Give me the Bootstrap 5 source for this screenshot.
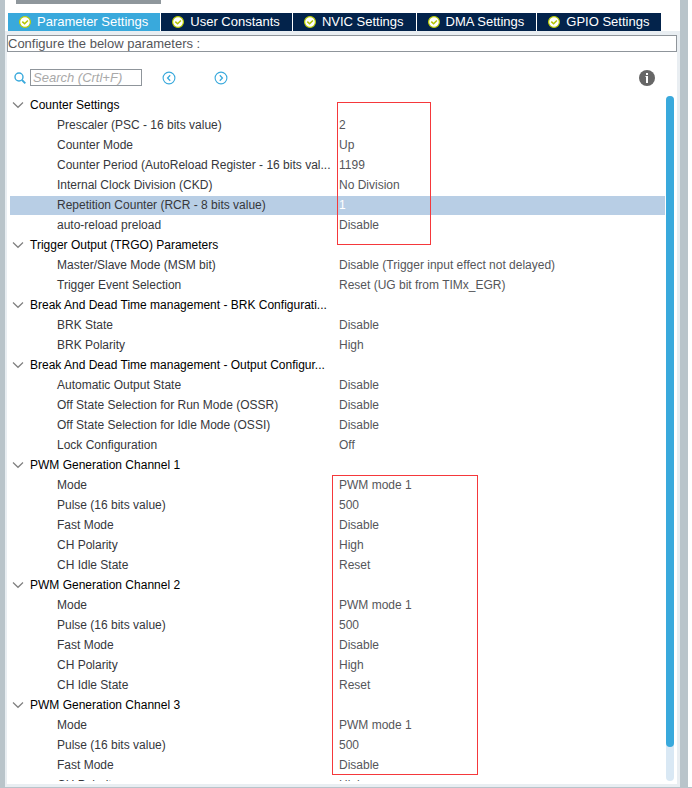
<!DOCTYPE html>
<html lang="en">
<head>
<meta charset="utf-8">
<meta name="viewport" content="width=device-width, initial-scale=1">
<title>Parameter Settings</title>
<link href="https://cdn.jsdelivr.net/npm/bootstrap@5.3.0/dist/css/bootstrap.min.css" rel="stylesheet">
<style>
  body { font: 12px/20px "Liberation Sans", Arial, sans-serif; color: #55565a; background: #fff; }
  .app-window { border-bottom: 1px solid #b9c4ca; padding-right: 4px; }
  .window-frame { border: solid #b9c4ca; border-width: 0 8px 0 5px; }
  .scroll-hint { width: 145px; height: 4px; margin-left: 11px; background: #8f979c; }
  .tab-strip { margin: 9px 0 0 3px; gap: 1px; }
  .config-tab { height: 18px; padding: 0 12px 0 11px; gap: 6px; border: 0; background: #03234b; color: #fff; font-size: 13px; line-height: 18px; white-space: nowrap; }
  .config-tab.active { background: #39a9dc; }
  .panel-edge { background: #e9eef2; padding: 4px 3px 3px 2px; min-height: 0; }
  .hint-line { border: 1px solid #8f959b; height: 17px; line-height: 15px; font-size: 13px; background: #fff; }
  .tool-row { padding: 17px 22px 0 7px; height: 43px; }
  .tool-row > * { height: 17px; align-items: center; }
  .find-box { width: 112px; margin: 0 20px 0 4px; padding: 0 2px; border: 1px solid #8f959b; border-radius: 0; font-size: 13px; font-style: italic; line-height: 15px; color: #55565a; }
  .find-box::placeholder { color: #a9a9a9; opacity: 1; }
  .bare-btn { border: 0; padding: 0; background: none; line-height: 1; display: flex; }
  .next-btn { margin-left: 38px; }
  .tree-area { min-height: 0; padding: 0 3px 3px; }
  .tree-clip { min-width: 0; margin-right: 1px; }
  .tree { table-layout: fixed; width: 100%; border-collapse: collapse; }
  .tree .name-col { width: 329px; }
  .tree th, .tree td { height: 20px; padding: 0; font-weight: 400; line-height: 20px; white-space: nowrap; }
  .tree tbody th { color: #36373b; padding-left: 47px; }
  .tree .group-row th { color: #000; padding-left: 2px; }
  .tree .group-row button { color: inherit; line-height: 20px; align-items: center; gap: 6px; }
  .tree .chosen-row { background: linear-gradient(#fff 1px, #b8cee5 1px); }
  .tree .chosen-row td { color: #fff; }
  .track { width: 8px; border-radius: 4px; background: #d9e8f4; margin: 1px 0 0; }
  .thumb { height: 95%; border-radius: 4px; background: #39a9dc; }
  .outline-note { position: absolute; border: 1px solid #f5383b; pointer-events: none; }
  .note-counter { left: 327px; top: 7px; width: 94px; height: 143px; }
  .note-pwm { left: 322px; top: 380px; width: 146px; height: 300px; }
</style>
<script src="https://cdn.jsdelivr.net/npm/bootstrap@5.3.0/dist/js/bootstrap.bundle.min.js"></script>
</head>
<body>
<svg class="d-none" aria-hidden="true">
  <symbol id="ok" viewBox="0 0 12 12"><circle cx="6" cy="6" r="5.4" fill="#fff" stroke="#bccf00" stroke-width="1.2"/><path d="M3.3 5.6 5.6 7.8 8.9 4.4" fill="none" stroke="#b4c400" stroke-width="1.5"/></symbol>
  <symbol id="down" viewBox="0 0 12 8"><path d="M1 1.5 6 6.3 11 1.5" fill="none" stroke="#808080" stroke-width="1.2"/></symbol>
</svg>
<div class="app-window vh-100 d-flex flex-column overflow-hidden">
<div class="window-frame flex-grow-1 d-flex flex-column overflow-hidden">
  <div class="scroll-hint flex-shrink-0"></div>
  <div class="tab-strip d-flex flex-shrink-0" role="tablist">
    <button class="config-tab active d-flex align-items-center" role="tab" aria-selected="true" type="button"><svg width="12" height="12"><use href="#ok"/></svg>Parameter Settings</button>
    <button class="config-tab d-flex align-items-center" role="tab" type="button"><svg width="12" height="12"><use href="#ok"/></svg>User Constants</button>
    <button class="config-tab d-flex align-items-center" role="tab" type="button"><svg width="12" height="12"><use href="#ok"/></svg>NVIC Settings</button>
    <button class="config-tab d-flex align-items-center" role="tab" type="button"><svg width="12" height="12"><use href="#ok"/></svg>DMA Settings</button>
    <button class="config-tab d-flex align-items-center" role="tab" type="button"><svg width="12" height="12"><use href="#ok"/></svg>GPIO Settings</button>
  </div>
  <div class="panel-edge flex-grow-1 d-flex flex-column">
    <div class="hint-line flex-shrink-0">Configure the below parameters :</div>
    <div class="bg-white flex-grow-1 d-flex flex-column overflow-hidden">
      <div class="tool-row d-flex align-items-start flex-shrink-0">
        <label for="find" class="d-flex" aria-label="Search"><svg width="12" height="12" viewBox="0 0 12 12" fill="none" stroke="#39a9dc"><circle cx="5" cy="5" r="4" stroke-width="1.4"/><path d="m8 8 3.3 3.3" stroke-width="1.8"/></svg></label>
        <input id="find" class="find-box" type="text" placeholder="Search (Crtl+F)">
        <button class="bare-btn" type="button" aria-label="Previous"><svg width="14" height="14" viewBox="0 0 14 14" fill="none" stroke="#39a9dc"><circle cx="7" cy="7" r="5.9" stroke-width="1.1"/><path d="M8.2 4.3 5.6 7l2.6 2.7" stroke-width="1.3"/></svg></button>
        <button class="bare-btn next-btn" type="button" aria-label="Next"><svg width="14" height="14" viewBox="0 0 14 14" fill="none" stroke="#39a9dc"><circle cx="7" cy="7" r="5.9" stroke-width="1.1"/><path d="M5.8 4.3 8.4 7 5.8 9.7" stroke-width="1.3"/></svg></button>
        <button class="bare-btn ms-auto" type="button" aria-label="Information"><svg width="16" height="16" viewBox="0 0 16 16"><circle cx="8" cy="8" r="8" fill="#666"/><path d="M7 3h2v2H7zM6.5 6H9v7H7V7h-.5z" fill="#fff"/></svg></button>
      </div>
      <div class="tree-area flex-grow-1 d-flex">
        <div class="tree-clip flex-grow-1 overflow-hidden position-relative">
          <table class="tree">
            <colgroup><col class="name-col"><col></colgroup>
            <tbody>
              <tr class="group-row"><th colspan="2"><button class="bare-btn" type="button"><svg width="12" height="8"><use href="#down"/></svg>Counter Settings</button></th></tr>
              <tr><th scope="row">Prescaler (PSC - 16 bits value)</th><td>2</td></tr>
              <tr><th scope="row">Counter Mode</th><td>Up</td></tr>
              <tr><th scope="row">Counter Period (AutoReload Register - 16 bits val...</th><td>1199</td></tr>
              <tr><th scope="row">Internal Clock Division (CKD)</th><td>No Division</td></tr>
              <tr class="chosen-row"><th scope="row">Repetition Counter (RCR - 8 bits value)</th><td>1</td></tr>
              <tr><th scope="row">auto-reload preload</th><td>Disable</td></tr>
              <tr class="group-row"><th colspan="2"><button class="bare-btn" type="button"><svg width="12" height="8"><use href="#down"/></svg>Trigger Output (TRGO) Parameters</button></th></tr>
              <tr><th scope="row">Master/Slave Mode (MSM bit)</th><td>Disable (Trigger input effect not delayed)</td></tr>
              <tr><th scope="row">Trigger Event Selection</th><td>Reset (UG bit from TIMx_EGR)</td></tr>
              <tr class="group-row"><th colspan="2"><button class="bare-btn" type="button"><svg width="12" height="8"><use href="#down"/></svg>Break And Dead Time management - BRK Configurati...</button></th></tr>
              <tr><th scope="row">BRK State</th><td>Disable</td></tr>
              <tr><th scope="row">BRK Polarity</th><td>High</td></tr>
              <tr class="group-row"><th colspan="2"><button class="bare-btn" type="button"><svg width="12" height="8"><use href="#down"/></svg>Break And Dead Time management - Output Configur...</button></th></tr>
              <tr><th scope="row">Automatic Output State</th><td>Disable</td></tr>
              <tr><th scope="row">Off State Selection for Run Mode (OSSR)</th><td>Disable</td></tr>
              <tr><th scope="row">Off State Selection for Idle Mode (OSSI)</th><td>Disable</td></tr>
              <tr><th scope="row">Lock Configuration</th><td>Off</td></tr>
              <tr class="group-row"><th colspan="2"><button class="bare-btn" type="button"><svg width="12" height="8"><use href="#down"/></svg>PWM Generation Channel 1</button></th></tr>
              <tr><th scope="row">Mode</th><td>PWM mode 1</td></tr>
              <tr><th scope="row">Pulse (16 bits value)</th><td>500</td></tr>
              <tr><th scope="row">Fast Mode</th><td>Disable</td></tr>
              <tr><th scope="row">CH Polarity</th><td>High</td></tr>
              <tr><th scope="row">CH Idle State</th><td>Reset</td></tr>
              <tr class="group-row"><th colspan="2"><button class="bare-btn" type="button"><svg width="12" height="8"><use href="#down"/></svg>PWM Generation Channel 2</button></th></tr>
              <tr><th scope="row">Mode</th><td>PWM mode 1</td></tr>
              <tr><th scope="row">Pulse (16 bits value)</th><td>500</td></tr>
              <tr><th scope="row">Fast Mode</th><td>Disable</td></tr>
              <tr><th scope="row">CH Polarity</th><td>High</td></tr>
              <tr><th scope="row">CH Idle State</th><td>Reset</td></tr>
              <tr class="group-row"><th colspan="2"><button class="bare-btn" type="button"><svg width="12" height="8"><use href="#down"/></svg>PWM Generation Channel 3</button></th></tr>
              <tr><th scope="row">Mode</th><td>PWM mode 1</td></tr>
              <tr><th scope="row">Pulse (16 bits value)</th><td>500</td></tr>
              <tr><th scope="row">Fast Mode</th><td>Disable</td></tr>
              <tr><th scope="row">CH Polarity</th><td>High</td></tr>
            </tbody>
          </table>
          <div class="outline-note note-counter"></div>
          <div class="outline-note note-pwm"></div>
        </div>
        <div class="track flex-shrink-0"><div class="thumb"></div></div>
      </div>
    </div>
  </div>
</div>
</div>
</body>
</html>
